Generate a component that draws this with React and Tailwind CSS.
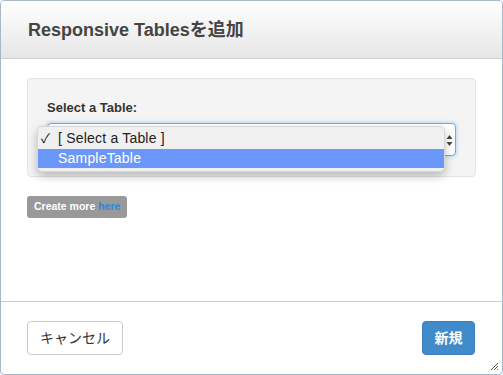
export default function App() {
  return (
    <div
      className="w-[503px] h-[375px] bg-white border border-[#a9b8c7] rounded-[4px] flex flex-col overflow-hidden relative"
      style={{ fontFamily: '"Liberation Sans", "Noto Sans CJK JP", sans-serif' }}
    >
      <header className="h-[58px] shrink-0 bg-gradient-to-b from-white to-[#e6e6e6] border-b border-[#cfcfcf] flex items-center px-[27px] pt-[2px]">
        <h1 className="text-[18px] font-bold text-[#444]">Responsive Tablesを追加</h1>
      </header>

      <main className="flex-1 px-[26px] pt-[19px]">
        <div className="bg-[#f4f4f4] border border-[#e3e3e3] rounded-[4px] px-[19px] pt-[20px] pb-[20px]">
          <label className="block text-[13px] font-bold text-[#333] leading-[18px] mb-[6px]">Select a Table:</label>
          <div className="relative h-[33px] rounded-[4px] border border-[#66afe9] bg-white shadow-[0_0_4px_rgba(102,175,233,0.6)]">
            <svg className="absolute right-[2px] top-[10px]" width="7" height="13" viewBox="0 0 7 13">
              <path d="M0.5 5 L3.5 1 L6.5 5 Z M0.5 8 L3.5 12 L6.5 8 Z" fill="#444" />
            </svg>
            <div className="absolute left-[-11px] top-[2px] w-[408px] h-[46px] rounded-[5px] bg-[#f0f0f0] border border-[#d6d6d6] shadow-[0_4px_10px_rgba(0,0,0,0.25)] pt-[1px] overflow-hidden">
              <div className="h-[21px] flex items-center text-[14px] text-[#222] pl-[3px]">
                <span className="w-[17px] text-[13px]">✓</span>
                <span className="tracking-[0.2px]">[ Select a Table ]</span>
              </div>
              <div className="h-[19px] flex items-center text-[14px] text-white bg-[#6b97fa] pl-[20px] tracking-[0.2px]">SampleTable</div>
            </div>
          </div>
        </div>
        <div className="mt-[19px] inline-flex items-center h-[22px] px-[7px] rounded-[3px] bg-[#999] text-[10.5px] font-bold text-white">
          Create more&nbsp;<span className="text-[#2f86d6]">here</span>
        </div>
      </main>

      <footer className="h-[73px] shrink-0 border-t border-[#c5ccd4] flex items-start justify-between pl-[26px] pr-[27px] pt-[19px]">
        <button className="h-[34px] px-[12px] w-[96px] rounded-[4px] border border-[#ccc] bg-white text-[14px] text-[#333]">キャンセル</button>
        <button className="h-[34px] w-[53px] rounded-[4px] bg-[#428bca] border border-[#3b7dc0] text-[14px] font-bold text-white">新規</button>
      </footer>

      <svg className="absolute right-[3px] bottom-[3px]" width="9" height="9" viewBox="0 0 9 9">
        <path d="M8 1 L1 8 M8 4 L4 8 M8 7 L7 8" stroke="#555" strokeWidth="1" />
      </svg>
    </div>
  )
}
